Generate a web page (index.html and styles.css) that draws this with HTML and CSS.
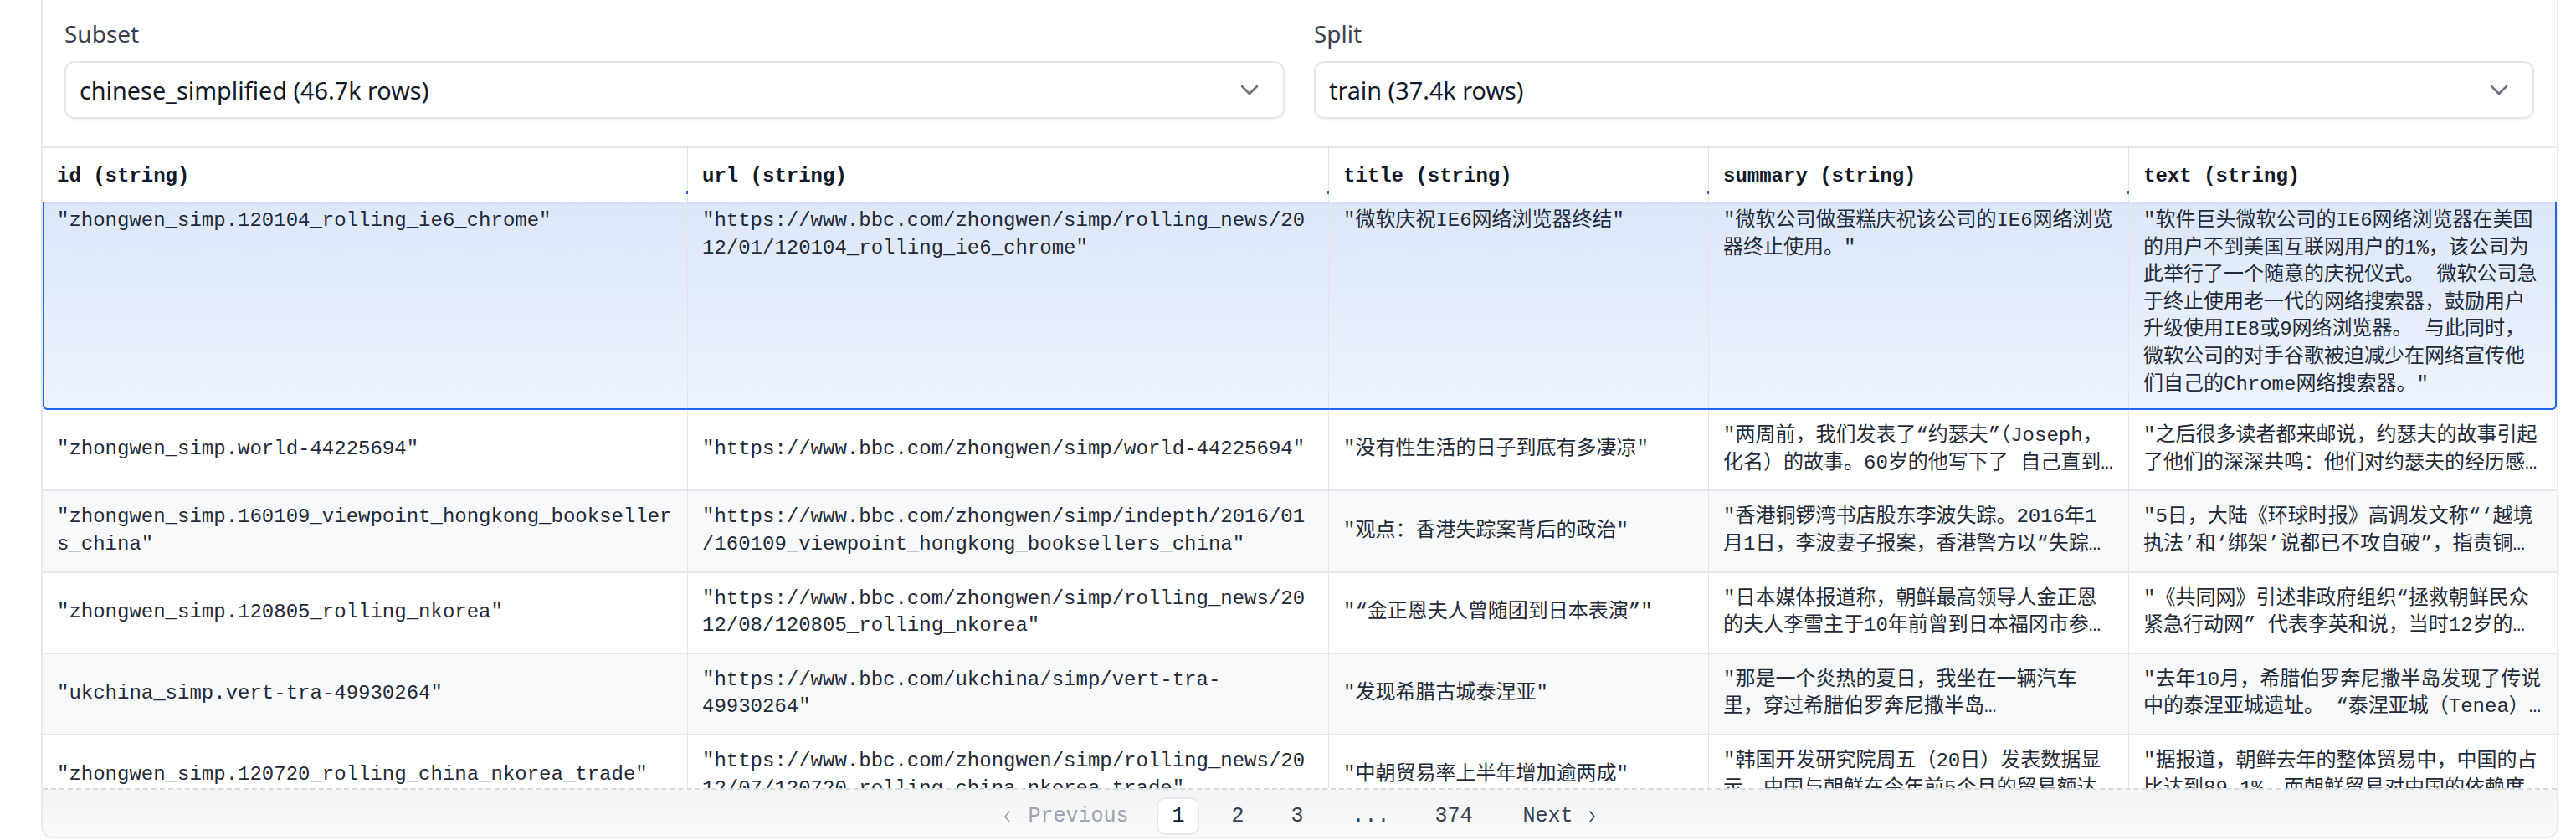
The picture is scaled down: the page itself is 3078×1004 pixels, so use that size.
FILE: index.html
```html
<!DOCTYPE html>
<html lang="zh-CN">
<head>
<meta charset="utf-8">
<title>Dataset viewer</title>
<link rel="stylesheet" href="styles.css">
</head>
<body>
<div class="panel">
  <div class="config">
    <div class="field">
      <div class="label">Subset</div>
      <div class="select">
        <span>chinese_simplified (46.7k rows)</span>
        <svg class="chev" width="22" height="13" viewBox="0 0 22 13"><path d="M2 2l9 9 9-9" fill="none" stroke="#6b7280" stroke-width="2.6" stroke-linecap="round" stroke-linejoin="round"/></svg>
      </div>
    </div>
    <div class="field">
      <div class="label">Split</div>
      <div class="select">
        <span>train (37.4k rows)</span>
        <svg class="chev" width="22" height="13" viewBox="0 0 22 13"><path d="M2 2l9 9 9-9" fill="none" stroke="#6b7280" stroke-width="2.6" stroke-linecap="round" stroke-linejoin="round"/></svg>
      </div>
    </div>
  </div>

  <div class="table">
    <div class="row head">
      <div class="cell">id (string)</div>
      <div class="cell">url (string)</div>
      <div class="cell">title (string)</div>
      <div class="cell">summary (string)</div>
      <div class="cell">text (string)</div>
    </div>
    <div class="body">
      <div class="row sel">
        <div class="cell"><div class="v">"zhongwen_simp.120104_rolling_ie6_chrome"</div></div>
        <div class="cell"><div class="v">"https://www.bbc.com/zhongwen/simp/rolling_news/2012/01/120104_rolling_ie6_chrome"</div></div>
        <div class="cell"><div class="v">"微软庆祝IE6网络浏览器终结"</div></div>
        <div class="cell"><div class="v">"微软公司做蛋糕庆祝该公司的IE6网络浏览器终止使用。"</div></div>
        <div class="cell"><div class="v">"软件巨头微软公司的IE6网络浏览器在美国的用户不到美国互联网用户的1%，该公司为此举行了一个随意的庆祝仪式。 微软公司急于终止使用老一代的网络搜索器，鼓励用户升级使用IE8或9网络浏览器。 与此同时，微软公司的对手谷歌被迫减少在网络宣传他们自己的Chrome网络搜索器。"</div></div>
      </div>
      <div class="row">
        <div class="cell"><div class="v">"zhongwen_simp.world-44225694"</div></div>
        <div class="cell"><div class="v">"https://www.bbc.com/zhongwen/simp/world-44225694"</div></div>
        <div class="cell"><div class="v">"没有性生活的日子到底有多凄凉"</div></div>
        <div class="cell"><div class="v">"两周前，我们发表了“约瑟夫”（Joseph，化名）的故事。60岁的他写下了 自己直到中年仍是处男的孤独经历。"</div></div>
        <div class="cell"><div class="v">"之后很多读者都来邮说，约瑟夫的故事引起了他们的深深共鸣：他们对约瑟夫的经历感同身受。"</div></div>
      </div>
      <div class="row alt">
        <div class="cell"><div class="v">"zhongwen_simp.160109_viewpoint_hongkong_booksellers_china"</div></div>
        <div class="cell"><div class="v">"https://www.bbc.com/zhongwen/simp/indepth/2016/01/160109_viewpoint_hongkong_booksellers_china"</div></div>
        <div class="cell"><div class="v">"观点：香港失踪案背后的政治"</div></div>
        <div class="cell"><div class="v">"香港铜锣湾书店股东李波失踪。2016年1月1日，李波妻子报案，香港警方以“失踪人口”立案调查。"</div></div>
        <div class="cell"><div class="v">"5日，大陆《环球时报》高调发文称“‘越境执法’和‘绑架’说都已不攻自破”，指责铜锣湾书店的经营者。"</div></div>
      </div>
      <div class="row">
        <div class="cell"><div class="v">"zhongwen_simp.120805_rolling_nkorea"</div></div>
        <div class="cell"><div class="v">"https://www.bbc.com/zhongwen/simp/rolling_news/2012/08/120805_rolling_nkorea"</div></div>
        <div class="cell"><div class="v">"“金正恩夫人曾随团到日本表演”"</div></div>
        <div class="cell"><div class="v">"日本媒体报道称，朝鲜最高领导人金正恩的夫人李雪主于10年前曾到日本福冈市参加演出。"</div></div>
        <div class="cell"><div class="v">"《共同网》引述非政府组织“拯救朝鲜民众紧急行动网” 代表李英和说，当时12岁的李雪主曾随朝鲜艺术团访问日本。"</div></div>
      </div>
      <div class="row alt">
        <div class="cell"><div class="v">"ukchina_simp.vert-tra-49930264"</div></div>
        <div class="cell"><div class="v">"https://www.bbc.com/ukchina/simp/vert-tra-49930264"</div></div>
        <div class="cell"><div class="v">"发现希腊古城泰涅亚"</div></div>
        <div class="cell"><div class="v">"那是一个炎热的夏日，我坐在一辆汽车里，穿过希腊伯罗奔尼撒半岛<br>汽车驶过一片片橄榄园。"</div></div>
        <div class="cell"><div class="v">"去年10月，希腊伯罗奔尼撒半岛发现了传说中的泰涅亚城遗址。 “泰涅亚城（Tenea）曾经是一座繁荣的城市。"</div></div>
      </div>
      <div class="row">
        <div class="cell"><div class="v">"zhongwen_simp.120720_rolling_china_nkorea_trade"</div></div>
        <div class="cell"><div class="v">"https://www.bbc.com/zhongwen/simp/rolling_news/2012/07/120720_rolling_china_nkorea_trade"</div></div>
        <div class="cell"><div class="v">"中朝贸易率上半年增加逾两成"</div></div>
        <div class="cell"><div class="v">"韩国开发研究院周五（20日）发表数据显示，中国与朝鲜在今年前5个月的贸易额达到历史新高。"</div></div>
        <div class="cell"><div class="v">"据报道，朝鲜去年的整体贸易中，中国的占比达到89.1%，而朝鲜贸易对中国的依赖度还在上升。"</div></div>
      </div>
    </div>
    <div class="pager">
      <span class="pg off prev"><svg width="9" height="16" viewBox="0 0 9 16"><path d="M7 2L2 8l5 6" fill="none" stroke="currentColor" stroke-width="1.6" stroke-linecap="round" stroke-linejoin="round"/></svg>Previous</span>
      <span class="pg cur">1</span>
      <span class="pg">2</span>
      <span class="pg">3</span>
      <span class="pg dots">...</span>
      <span class="pg num">374</span>
      <span class="pg next">Next<svg width="9" height="16" viewBox="0 0 9 16"><path d="M2 2l5 6-5 6" fill="none" stroke="currentColor" stroke-width="1.6" stroke-linecap="round" stroke-linejoin="round"/></svg></span>
    </div>
  </div>
</div>
</body>
</html>
```

FILE: styles.css
```css
* { box-sizing: border-box; }
html, body { margin: 0; padding: 0; background: #ffffff; }
body {
  font-family: "Noto Sans", "Noto Sans CJK SC", sans-serif;
  color: #111827;
  width: 3078px;
  height: 1004px;
  overflow: hidden;
}
.panel {
  margin-left: 49px;
  width: 3008px;
  height: 1002px;
  border: 2px solid #e8e9ec;
  border-top: none;
  border-radius: 0 0 14px 14px;
  overflow: hidden;
  display: flex;
  flex-direction: column;
}
.config {
  display: grid;
  grid-template-columns: 1458px 1458px;
  column-gap: 35px;
  padding: 21px 27px 0 26px;
  height: 175px;
  flex: none;
}
.label {
  font-size: 28px;
  line-height: 38px;
  color: #374151;
}
.select {
  margin-top: 14px;
  height: 69px;
  border: 2px solid #e5e7eb;
  border-radius: 12px;
  box-shadow: 0 2px 3px rgba(0, 0, 0, 0.05);
  display: flex;
  align-items: center;
  justify-content: space-between;
  padding: 0 29px 0 16px;
  font-size: 28.8px;
  color: #111827;
}
.chev { display: block; }
.table {
  border-top: 2px solid #e5e7eb;
  flex: 1;
  display: flex;
  flex-direction: column;
  min-height: 0;
}
.row {
  display: grid;
  grid-template-columns: 771px 766px 454px 502px 511px;
  font-family: "Liberation Mono", "Noto Sans CJK SC", monospace;
  font-size: 24px;
  line-height: 32.6px;
  color: #1f2937;
  border-bottom: 2px solid #e5e7eb;
}
.cell {
  padding: 15px 17px;
  border-right: 1px solid #e3e5e9;
  display: flex;
  align-items: center;
  min-width: 0;
  overflow-wrap: break-word;
}
.cell:last-child { border-right: none; }
.v {
  min-width: 0;
  width: 100%;
  display: -webkit-box;
  -webkit-line-clamp: 2;
  -webkit-box-orient: vertical;
  overflow: hidden;
}
.head {
  height: 64px;
  border-bottom: none;
  box-shadow: 0 2px 3px rgba(0, 0, 0, 0.05);
  position: relative;
  z-index: 2;
  background: #fff;
  font-weight: bold;
  color: #111827;
}
.head .cell {
  padding: 4px 17px 0;
  position: relative;
}
.head .cell:not(:last-child)::after {
  content: "";
  position: absolute;
  right: -1px;
  bottom: 9px;
  width: 2px;
  height: 4px;
  background: #2563eb;
}
.body {
  height: 701px;
  overflow: hidden;
  flex: none;
}
.alt { background: #f8f9fb; }
.sel {
  background: linear-gradient(to bottom, #dce7fa, #eef4fe);
  border-bottom: none;
  padding-bottom: 2px;
  border-radius: 0 0 6px 6px;
  box-shadow: inset 2px 0 0 #2563eb, inset -2px 0 0 #2563eb, inset 0 -2px 0 #2563eb;
}
.sel .cell {
  align-items: flex-start;
  padding-top: 7px;
  padding-bottom: 12px;
}
.sel .v {
  display: block;
  overflow: visible;
}
.pager {
  flex: 1;
  border-top: 2px dashed #d6d9de;
  background: linear-gradient(to bottom, #f3f4f6, #f9fafb);
  display: flex;
  justify-content: center;
  align-items: flex-start;
  gap: 20px;
  padding-top: 9px;
  font-family: "Liberation Mono", monospace;
  font-size: 25px;
  color: #374151;
}
.pg {
  height: 45px;
  min-width: 51px;
  padding: 0 12px;
  display: flex;
  align-items: center;
  justify-content: center;
  border-radius: 10px;
  border: 2px solid transparent;
}
.pg.prev { gap: 20px; }
.pg.next { gap: 18px; margin-left: 12px; }
.pg.off { color: #9ca3af; }
.pg.cur {
  border-color: #e5e7eb;
  background: #ffffff;
  color: #111827;
}
.dots { margin: 0 6px; }
```
